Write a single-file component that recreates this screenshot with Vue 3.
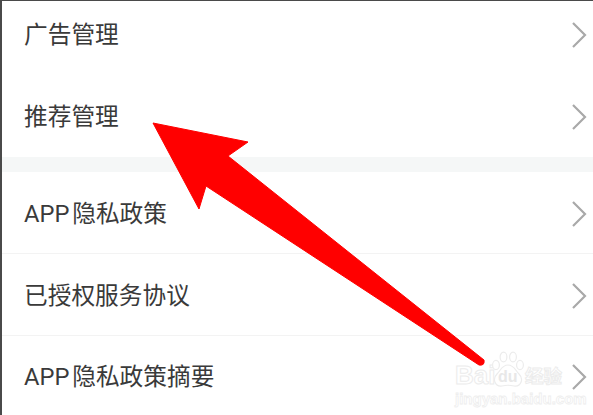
<template>
  <div class="screen">
    <!-- Setting rows, split in two groups by the grey band -->
    <div class="group group-first">
      <div v-for="row in firstGroup" :key="row" class="row">
        <span class="label">{{ row }}</span>
        <svg class="chevron" width="16" height="28" viewBox="0 0 16 28">
          <path d="M2 2 L14 14 L2 26" fill="none" stroke="#a9a9a9" stroke-width="2.2" />
        </svg>
      </div>
    </div>
    <div class="band"></div>
    <div class="group group-second">
      <div v-for="row in secondGroup" :key="row" class="row row-line">
        <span class="label">{{ row }}</span>
        <svg class="chevron" width="16" height="28" viewBox="0 0 16 28">
          <path d="M2 2 L14 14 L2 26" fill="none" stroke="#a9a9a9" stroke-width="2.2" />
        </svg>
      </div>
    </div>

    <div class="frame-tint"></div>

    <!-- Red arrow drawn over the screenshot -->
    <svg class="arrow" width="593" height="415" viewBox="0 0 593 415">
      <path
        d="M153 123 L248 142 L228 156 L484 360 Q485 366 479 365 L206 186 L199 209 Z"
        fill="#ff0000"
        stroke="#ff0000"
        stroke-width="1"
        stroke-linejoin="round"
      />
    </svg>

    <!-- Watermark -->
    <div class="mark">
      <div class="mark-top">
        <span class="mark-text">Bai</span>
        <span class="paw">
          <svg width="34" height="38" viewBox="0 0 34 38">
            <g fill="#fff" stroke="#ececec" stroke-width="1.2">
              <ellipse cx="5" cy="14" rx="3.4" ry="4.6" />
              <ellipse cx="12.5" cy="6" rx="3.4" ry="4.8" />
              <ellipse cx="22" cy="6" rx="3.4" ry="4.8" />
              <ellipse cx="29" cy="14" rx="3.4" ry="4.6" />
              <path d="M17 14 C23 14 24 19 28 23 C33 28 30 36 23 35 C19 34 15 34 11 35 C4 36 1 28 6 23 C10 19 11 14 17 14 Z" />
            </g>
          </svg>
          <span class="paw-du">du</span>
        </span>
        <span class="mark-cn">经验</span>
      </div>
      <div class="mark-url">jingyan.baidu.com</div>
    </div>
  </div>
</template>

<script setup>
const firstGroup = ['广告管理', '推荐管理']
const secondGroup = ['APP 隐私政策', '已授权服务协议', 'APP 隐私政策摘要']
</script>

<style scoped>
.screen {
  position: relative;
  width: 593px;
  height: 415px;
  overflow: hidden;
  box-sizing: border-box;
  background: #fff;
  border-top: 1px solid #4a4a4a;
  border-left: 2px solid #4a4a4a;
  font-family: Roboto, "Noto Sans CJK SC", sans-serif;
}

.group-first {
  margin-top: -7px;
}

.group-second {
  margin-top: 1px;
}

.row {
  display: flex;
  align-items: center;
  justify-content: space-between;
  height: 82px;
  padding: 0 6px 0 22px;
}

.row-line {
  height: 81px;
  box-sizing: border-box;
  padding-top: 2px;
  border-bottom: 1px solid #f3f3f3;
}

.row-line:nth-child(2) {
  height: 82px;
}

.row-line:last-child {
  padding-top: 0;
  border-bottom: none;
}

.label {
  margin-bottom: 4px;
  font-size: 23.7px;
  word-spacing: -3px;
  color: #3a3a3a;
  white-space: nowrap;
}

.chevron {
  display: block;
}

.band {
  height: 15px;
  margin-top: -1px;
  background: #f5f7f7;
}

.frame-tint {
  position: absolute;
  left: -2px;
  top: 117px;
  width: 2px;
  height: 48px;
  background: #5e3a3a;
}

.arrow {
  position: absolute;
  left: -2px;
  top: -1px;
}

.mark {
  position: absolute;
  left: 453px;
  top: 350px;
  width: 110px;
  font-family: "Liberation Sans", "Noto Sans CJK SC", sans-serif;
}

.mark-top {
  display: flex;
  align-items: flex-end;
  height: 37px;
}

.mark-text {
  width: 36px;
  font-size: 26px;
  line-height: 25px;
  font-weight: 700;
  color: #fff;
  -webkit-text-stroke: 1px #ececec;
}

.paw {
  position: relative;
  width: 34px;
  height: 37px;
  flex-shrink: 0;
}

.paw svg {
  display: block;
}

.paw-du {
  position: absolute;
  left: 7px;
  top: 17px;
  font-size: 16px;
  line-height: 18px;
  font-weight: 700;
  color: #e8e8e8;
}

.mark-cn {
  font-size: 18.5px;
  line-height: 22px;
  font-weight: 700;
  color: #fff;
  -webkit-text-stroke: 1px #ececec;
  white-space: nowrap;
}

.mark-url {
  margin-top: 3px;
  font-size: 15px;
  line-height: 16px;
  font-weight: 700;
  color: #fff;
  -webkit-text-stroke: 0.8px #eeeeee;
  white-space: nowrap;
}
</style>
